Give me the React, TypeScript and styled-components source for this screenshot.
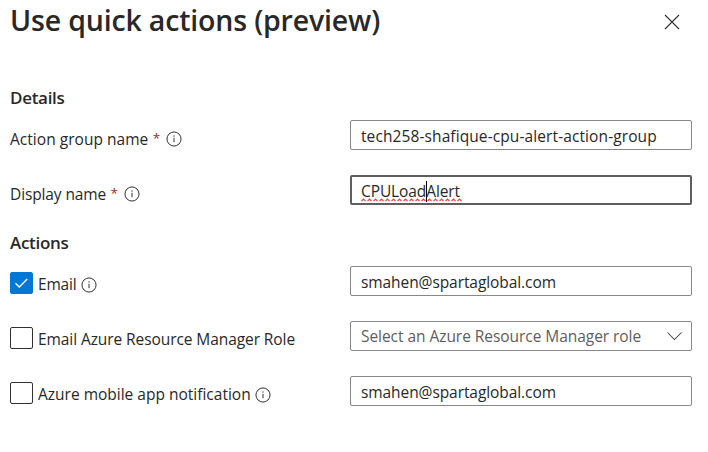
import React from 'react';
import styled, { createGlobalStyle } from 'styled-components';

const GlobalStyle = createGlobalStyle`
  * { box-sizing: border-box; }
  body {
    margin: 0;
    background: #fff;
    color: #292827;
    font-family: "Segoe UI", "Open Sans", "Noto Sans", sans-serif;
    overflow: hidden;
  }
`;

const Panel = styled.main`
  display: flex;
  flex-direction: column;
  width: 708px;
  height: 452px;
  padding: 0 16px 0 10px;
`;

const Header = styled.header`
  display: flex;
  justify-content: space-between;
  height: 87px;
`;

const Title = styled.h1`
  margin: 0;
  font-size: 28.5px;
  font-weight: 600;
  line-height: 41px;
  letter-spacing: -0.17px;
  white-space: nowrap;
`;

const CloseButton = styled.button`
  display: flex;
  width: 16px;
  height: 16px;
  margin: 14px 12.5px 0 0;
  padding: 0;
  border: 0;
  background: none;
`;

const Section = styled.section<{ $height: number }>`
  display: flex;
  flex-direction: column;
  height: ${(p) => p.$height}px;
`;

const SectionTitle = styled.h2<{ $height: number }>`
  margin: 0;
  height: ${(p) => p.$height}px;
  font-size: 17px;
  font-weight: 600;
  line-height: 22px;
  letter-spacing: -0.3px;
`;

const Row = styled.div`
  display: grid;
  grid-template-columns: 340px 342px;
  height: 55px;
`;

const LabelCell = styled.label<{ $top: number }>`
  display: flex;
  align-items: flex-start;
  height: 30px;
  padding-top: ${(p) => p.$top}px;
`;

const LabelText = styled.span<{ $spacing?: number; $width: number }>`
  width: ${(p) => p.$width}px;
  font-size: 15.5px;
  line-height: 22px;
  letter-spacing: ${(p) => p.$spacing ?? 0}px;
  white-space: nowrap;
`;

const ActionText = styled(LabelText)`
  margin-top: 1px;
`;

const Required = styled.span`
  width: 13px;
  color: #a4262c;
  font-size: 13.5px;
  line-height: 21px;
`;

const CheckBox = styled.span<{ $checked?: boolean }>`
  display: flex;
  align-items: center;
  justify-content: center;
  width: 23px;
  height: 22px;
  margin-right: 5px;
  border: 1px solid ${(p) => (p.$checked ? '#0078d4' : '#323130')};
  border-radius: 2px;
  background: ${(p) => (p.$checked ? '#0078d4' : '#fff')};
`;

const Field = styled.div<{ $focused?: boolean; $placeholder?: boolean; $spacing?: number }>`
  display: flex;
  align-items: center;
  justify-content: space-between;
  height: 30px;
  padding: ${(p) => (p.$focused ? '2px 8px 0 9px' : p.$placeholder ? '0 9px 0 10px' : '2px 9px 0 10px')};
  border: ${(p) => (p.$focused ? '2px solid #605e5c' : '1px solid #8a8886')};
  border-radius: 2px;
  color: ${(p) => (p.$placeholder ? '#605e5c' : '#292827')};
  font-size: 15.5px;
  line-height: 22px;
  letter-spacing: ${(p) => p.$spacing ?? 0}px;
  white-space: nowrap;
`;

const Misspelled = styled.span`
  position: relative;
`;

const Squiggle = styled.svg`
  position: absolute;
  left: 0;
  top: 18px;
`;

const Caret = styled.span`
  display: inline-block;
  width: 1px;
  height: 21px;
  margin: 0 -1px 0 0;
  background: #000;
  vertical-align: -5px;
`;

const InfoSvg = styled.svg`
  flex: none;
  margin-top: 3px;
`;

const InfoIcon = () => (
  <InfoSvg width="16" height="16" viewBox="0 0 16 16" fill="none">
    <circle cx="8" cy="8" r="7.05" stroke="#323130" strokeWidth="1" />
    <path d="M8 6.8V11.2" stroke="#323130" strokeWidth="1" />
    <circle cx="8" cy="5" r=".65" fill="#323130" />
  </InfoSvg>
);

const ActionInfo = styled.span`
  display: flex;
  margin-top: 1.5px;
`;

const CheckIcon = () => (
  <svg width="15" height="12" viewBox="0 0 15 12" fill="none">
    <path d="M1.5 6.3L5.3 10L13.2 2" stroke="#fff" strokeWidth="1.3" />
  </svg>
);

const Chevron = () => (
  <svg width="16" height="10" viewBox="0 0 16 10" fill="none">
    <path d="M1.5 1.5L8.5 8.5L15.5 1.5" stroke="#484644" strokeWidth="1.05" />
  </svg>
);

const waves = Array.from({ length: 17 }, (_, i) => `M${i * 6 + 0.5} 3.2L${i * 6 + 2.5} 1.2L${i * 6 + 4.5} 3.2`).join('');

export default function App() {
  return (
    <>
      <GlobalStyle />
      <Panel>
        <Header>
          <Title>Use quick actions (preview)</Title>
          <CloseButton aria-label="Close">
            <svg width="16" height="16" viewBox="0 0 16 16" fill="none">
              <path d="M1 1L15 15M15 1L1 15" stroke="#323130" strokeWidth="1.1" />
            </svg>
          </CloseButton>
        </Header>

        <Section $height={145}>
          <SectionTitle $height={33}>Details</SectionTitle>
          <Row>
            <LabelCell $top={8}>
              <LabelText $width={142.7} $spacing={0.03}>Action group name</LabelText>
              <Required>*</Required>
              <InfoIcon />
            </LabelCell>
            <Field $spacing={0.1}>tech258-shafique-cpu-alert-action-group</Field>
          </Row>
          <Row>
            <LabelCell $top={8}>
              <LabelText $width={100.5} $spacing={-0.12}>Display name</LabelText>
              <Required>*</Required>
              <InfoIcon />
            </LabelCell>
            <Field $focused $spacing={-0.1}>
              <Misspelled>
                CPULoad<Caret />Alert
                <Squiggle width="101" height="4" viewBox="0 0 101 4" fill="none">
                  <path d={waves} stroke="#f03a3a" strokeWidth="1.2" />
                </Squiggle>
              </Misspelled>
            </Field>
          </Row>
        </Section>

        <Section $height={220}>
          <SectionTitle $height={34}>Actions</SectionTitle>
          <Row>
            <LabelCell $top={6}>
              <CheckBox $checked><CheckIcon /></CheckBox>
              <ActionText $width={42.5} $spacing={-0.2}>Email</ActionText>
              <ActionInfo><InfoIcon /></ActionInfo>
            </LabelCell>
            <Field $spacing={-0.08}>smahen@spartaglobal.com</Field>
          </Row>
          <Row>
            <LabelCell $top={6}>
              <CheckBox />
              <ActionText $width={260} $spacing={-0.08}>Email Azure Resource Manager Role</ActionText>
            </LabelCell>
            <Field $placeholder $spacing={-0.05}>
              Select an Azure Resource Manager role
              <Chevron />
            </Field>
          </Row>
          <Row>
            <LabelCell $top={6}>
              <CheckBox />
              <ActionText $width={216.6}>Azure mobile app notification</ActionText>
              <ActionInfo><InfoIcon /></ActionInfo>
            </LabelCell>
            <Field $spacing={-0.08}>smahen@spartaglobal.com</Field>
          </Row>
        </Section>
      </Panel>
    </>
  );
}
